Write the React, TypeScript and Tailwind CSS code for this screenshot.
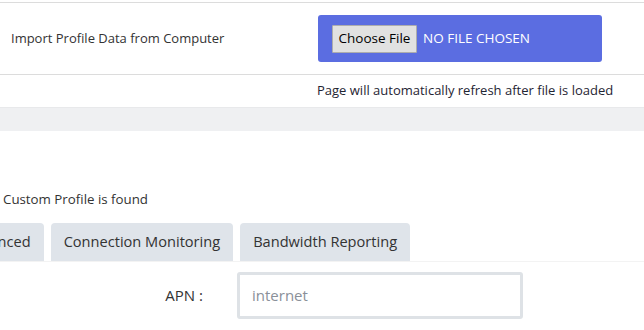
const tabs = ["Advanced", "Connection Monitoring", "Bandwidth Reporting"];

const App = () => {
  return (
    <div
      className="w-[644px] h-[330px] overflow-hidden bg-white text-[#333]"
      style={{ fontFamily: '"Open Sans", "Noto Sans", sans-serif' }}
    >
      <div className="pt-[2px]">
        <div className="flex items-center h-[73px] border-y border-[#dcdcdc]">
          <div className="w-[318px] pl-[11px] text-[13px]">
            Import Profile Data from Computer
          </div>
          <div className="w-[284px] h-[47px] bg-[#5b6de1] rounded-[3px] flex items-center pl-[14px] gap-[6px]">
            <button className="h-[28px] w-[85px] bg-[#e1e1e1] border border-[#adadad] text-[13.5px] text-black rounded-[1px]">
              Choose File
            </button>
            <span className="text-white text-[13.5px]">NO FILE CHOSEN</span>
          </div>
        </div>
        <div className="h-[32px] flex items-center pl-[317px] text-[13px] text-[#1f2533]">
          Page will automatically refresh after file is loaded
        </div>
        <div className="h-[24px] bg-[#eff0f2] border-t border-[#e8e9eb]" />
      </div>

      <div className="pt-[59px] pl-[3px] text-[13.3px] text-[#333]">
        Custom Profile is found
      </div>

      <div className="mt-[13px] flex items-end gap-[7px] ml-[-49px] border-b border-[#f3f3f3]">
        {tabs.map((t) => (
          <div
            key={t}
            className="h-[38px] px-[13px] flex items-center bg-[#dfe4ea] rounded-t-[4px] text-[14.6px] text-[#333]"
          >
            {t}
          </div>
        ))}
      </div>

      <div className="flex items-center mt-[10px]">
        <div className="w-[203px] text-right text-[15px] text-[#333]">APN :</div>
        <input
          className="ml-[34px] w-[286px] h-[47px] border-[3px] border-[#dee2e6] rounded-[3px] px-[12px] text-[15px] outline-none placeholder:text-[#8a9099]"
          placeholder="internet"
        />
      </div>
    </div>
  );
};

export default App;
